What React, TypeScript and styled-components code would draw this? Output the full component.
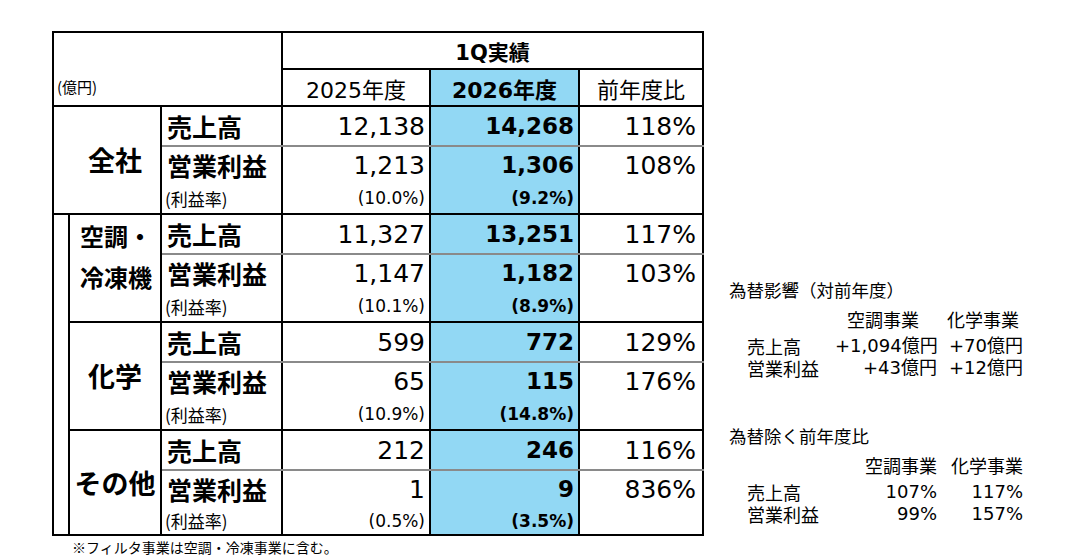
import React from "react";
import styled, { createGlobalStyle } from "styled-components";

const GlobalStyle = createGlobalStyle`
  html, body {
    margin: 0;
    padding: 0;
    background: #fff;
  }
  body {
    width: 1066px;
    height: 558px;
    overflow: hidden;
    color: #000;
    font-family: "DejaVu Sans", "Noto Sans CJK JP", sans-serif;
  }
`;

const BLUE = "#92d8f4";
const LINE = "2px solid #000";
const GRAY_LINE = "2px solid #8a8a8a";

type Line = "black" | "gray" | "none";
const lineOf = (l: Line) => (l === "black" ? LINE : l === "gray" ? GRAY_LINE : "none");

const Page = styled.div`
  display: flex;
  align-items: flex-start;
  padding: 31px 0 0 52px;
`;

const LeftColumn = styled.div`
  display: flex;
  flex-direction: column;
`;

const Table = styled.table`
  border-collapse: collapse;
  table-layout: fixed;
  width: 650px;
  border: ${LINE};
`;

const Row = styled.tr<{ $h: number }>`
  height: ${p => p.$h}px;
`;

const Corner = styled.td`
  vertical-align: bottom;
  padding: 0 0 8px 3px;
  font-family: "Noto Sans CJK JP", sans-serif;
  font-size: 15px;
  line-height: 20px;
  border-right: ${LINE};
  border-bottom: ${LINE};
`;

const PeriodHead = styled.td`
  text-align: center;
  font-weight: 700;
  font-size: 21px;
  padding: 0;
  border-bottom: ${LINE};
`;

const YearHead = styled.td<{ $blue?: boolean }>`
  text-align: center;
  font-size: 22px;
  font-weight: ${p => (p.$blue ? 700 : 400)};
  background: ${p => (p.$blue ? BLUE : "transparent")};
  padding: 0;
  border-right: ${LINE};
  border-bottom: ${LINE};
`;

const Gutter = styled.td`
  padding: 0;
  border-bottom: ${LINE};
`;

const SegmentName = styled.td<{ $indent?: number; $stacked?: boolean }>`
  font-family: "Noto Sans CJK JP", sans-serif;
  font-weight: 700;
  font-size: ${p => (p.$stacked ? 24 : 27)}px;
  line-height: ${p => (p.$stacked ? 41 : 32)}px;
  text-align: ${p => (p.$stacked ? "left" : "center")};
  vertical-align: ${p => (p.$stacked ? "top" : "middle")};
  padding: 0 0 0 ${p => (p.$stacked ? 10 : p.$indent ?? 0)}px;
  border-left: ${LINE};
  border-right: ${LINE};
  border-bottom: ${LINE};
  white-space: nowrap;
`;

const Item = styled.td<{ $rate?: boolean; $line: Line }>`
  font-family: "Noto Sans CJK JP", sans-serif;
  font-weight: ${p => (p.$rate ? 400 : 700)};
  font-size: ${p => (p.$rate ? 17 : 25)}px;
  padding: 0 0 0 ${p => (p.$rate ? 3 : 5)}px;
  white-space: nowrap;
  border-right: ${LINE};
  border-bottom: ${p => lineOf(p.$line)};
`;

const Value = styled.td<{ $blue?: boolean; $rate?: boolean; $line: Line; $pad?: number }>`
  text-align: right;
  white-space: nowrap;
  font-size: ${p => (p.$rate ? 17 : p.$blue ? 23 : 25)}px;
  font-weight: ${p => (p.$blue ? 700 : 400)};
  background: ${p => (p.$blue ? BLUE : "transparent")};
  padding: 0 ${p => p.$pad ?? 4}px 0 0;
  border-right: ${LINE};
  border-bottom: ${p => lineOf(p.$line)};
`;

const Footnote = styled.div`
  font-family: "Noto Sans CJK JP", sans-serif;
  font-size: 14px;
  line-height: 17px;
  margin: 3px 0 0 20px;
`;

const NotesPanel = styled.div`
  display: flex;
  flex-direction: column;
  gap: 46px;
  margin: 248px 0 0 25px;
`;

const NoteBlock = styled.div`
  display: flex;
  flex-direction: column;
`;

const NoteTitle = styled.div`
  font-family: "Noto Sans CJK JP", sans-serif;
  font-size: 17.5px;
  line-height: 22px;
  white-space: nowrap;
`;

const NoteGrid = styled.div`
  display: grid;
  grid-template-columns: 88px 102px 86px;
  padding-left: 18px;
  margin-top: 7px;
  font-size: 18px;
  line-height: 22px;
`;

const NoteHead = styled.div<{ $pad?: number }>`
  text-align: right;
  padding-right: ${p => p.$pad ?? 0}px;
  margin-bottom: 5px;
  font-family: "Noto Sans CJK JP", sans-serif;
  white-space: nowrap;
`;

const NoteLabel = styled.div`
  font-family: "Noto Sans CJK JP", sans-serif;
  white-space: nowrap;
`;

const NoteValue = styled.div`
  text-align: right;
  white-space: nowrap;
`;

type Segment = {
  name: string[];
  sales: string[];
  profit: string[];
  rate: string[];
  rateHeight: number;
};

const segments: Segment[] = [
  { name: ["全社"], sales: ["12,138", "14,268", "118%"], profit: ["1,213", "1,306", "108%"], rate: ["(10.0%)", "(9.2%)"], rateHeight: 31 },
  { name: ["空調・", "冷凍機"], sales: ["11,327", "13,251", "117%"], profit: ["1,147", "1,182", "103%"], rate: ["(10.1%)", "(8.9%)"], rateHeight: 31 },
  { name: ["化学"], sales: ["599", "772", "129%"], profit: ["65", "115", "176%"], rate: ["(10.9%)", "(14.8%)"], rateHeight: 31 },
  { name: ["その他"], sales: ["212", "246", "116%"], profit: ["1", "9", "836%"], rate: ["(0.5%)", "(3.5%)"], rateHeight: 28 },
];

const fxImpact = {
  title: "為替影響（対前年度）",
  heads: [
    { text: "空調事業", pad: 18 },
    { text: "化学事業", pad: 4 },
  ],
  rows: [
    ["売上高", "+1,094億円", "+70億円"],
    ["営業利益", "+43億円", "+12億円"],
  ],
};

const fxExcluded = {
  title: "為替除く前年度比",
  heads: [
    { text: "空調事業", pad: 0 },
    { text: "化学事業", pad: 0 },
  ],
  rows: [
    ["売上高", "107%", "117%"],
    ["営業利益", "99%", "157%"],
  ],
};

const SegmentRows = ({ seg, index }: { seg: Segment; index: number }) => {
  const first = index === 0;
  return (
    <>
      <Row $h={40}>
        {index === 1 && <Gutter rowSpan={9} />}
        <SegmentName
          rowSpan={3}
          colSpan={first ? 2 : 1}
          $indent={first ? 16 : 0}
          $stacked={seg.name.length > 1}
        >
          {seg.name.map((n, i) => (
            <div key={i}>{n}</div>
          ))}
        </SegmentName>
        <Item $line="gray">売上高</Item>
        <Value $line="gray">{seg.sales[0]}</Value>
        <Value $line="gray" $blue>{seg.sales[1]}</Value>
        <Value $line="gray" $pad={6}>{seg.sales[2]}</Value>
      </Row>
      <Row $h={34}>
        <Item $line="none">営業利益</Item>
        <Value $line="none">{seg.profit[0]}</Value>
        <Value $line="none" $blue>{seg.profit[1]}</Value>
        <Value $line="none" $pad={6}>{seg.profit[2]}</Value>
      </Row>
      <Row $h={seg.rateHeight}>
        <Item $line="black" $rate>(利益率)</Item>
        <Value $line="black" $rate>{seg.rate[0]}</Value>
        <Value $line="black" $rate $blue>{seg.rate[1]}</Value>
        <Value $line="black" $pad={6} />
      </Row>
    </>
  );
};

const Note = ({ data }: { data: typeof fxImpact }) => (
  <NoteBlock>
    <NoteTitle>{data.title}</NoteTitle>
    <NoteGrid>
      <span />
      {data.heads.map(h => (
        <NoteHead key={h.text} $pad={h.pad}>{h.text}</NoteHead>
      ))}
      {data.rows.map(r => (
        <React.Fragment key={r[0]}>
          <NoteLabel>{r[0]}</NoteLabel>
          <NoteValue>{r[1]}</NoteValue>
          <NoteValue>{r[2]}</NoteValue>
        </React.Fragment>
      ))}
    </NoteGrid>
  </NoteBlock>
);

export default function App() {
  return (
    <>
      <GlobalStyle />
      <Page>
        <LeftColumn>
          <Table>
            <colgroup>
              <col style={{ width: 16 }} />
              <col style={{ width: 92 }} />
              <col style={{ width: 121 }} />
              <col style={{ width: 148 }} />
              <col style={{ width: 149 }} />
              <col style={{ width: 124 }} />
            </colgroup>
            <tbody>
              <Row $h={37}>
                <Corner rowSpan={2} colSpan={3}>(億円)</Corner>
                <PeriodHead colSpan={3}>1Q実績</PeriodHead>
              </Row>
              <Row $h={37}>
                <YearHead>2025年度</YearHead>
                <YearHead $blue>2026年度</YearHead>
                <YearHead>前年度比</YearHead>
              </Row>
              {segments.map((s, i) => (
                <SegmentRows key={i} seg={s} index={i} />
              ))}
            </tbody>
          </Table>
          <Footnote>※フィルタ事業は空調・冷凍事業に含む。</Footnote>
        </LeftColumn>
        <NotesPanel>
          <Note data={fxImpact} />
          <Note data={fxExcluded} />
        </NotesPanel>
      </Page>
    </>
  );
}
